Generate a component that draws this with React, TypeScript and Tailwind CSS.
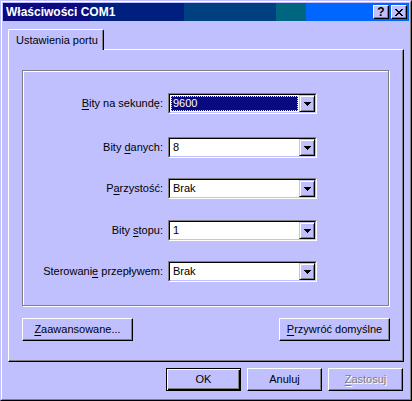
import React from "react";

const FONT = "font-['Liberation_Sans',Arial,sans-serif]";

function U({ c }: { c: string }) {
  return <span className="underline decoration-1 underline-offset-[2px]">{c}</span>;
}

const raised =
  "bg-[#c0c0ff] border border-t-white border-l-white border-r-black border-b-black shadow-[inset_-1px_-1px_0_#808080]";

function Arrow() {
  return (
    <svg width="7" height="4" viewBox="0 0 7 4" shapeRendering="crispEdges">
      <rect x="0" y="0" width="7" height="1" fill="#000" />
      <rect x="1" y="1" width="5" height="1" fill="#000" />
      <rect x="2" y="2" width="3" height="1" fill="#000" />
      <rect x="3" y="3" width="1" height="1" fill="#000" />
    </svg>
  );
}

function CloseX() {
  const px: [number, number, number][] = [
    [0, 0, 2], [6, 0, 2],
    [1, 1, 2], [5, 1, 2],
    [2, 2, 4],
    [3, 3, 2],
    [2, 4, 4],
    [1, 5, 2], [5, 5, 2],
    [0, 6, 2], [6, 6, 2],
  ];
  return (
    <svg width="8" height="7" viewBox="0 0 8 7" shapeRendering="crispEdges">
      {px.map(([x, y, w], i) => (
        <rect key={i} x={x} y={y} width={w} height={1} fill="#000" />
      ))}
    </svg>
  );
}

function Combo({ value, selected }: { value: string; selected?: boolean }) {
  return (
    <div className="w-[149px] h-[21px] border border-t-[#808080] border-l-[#808080] border-r-white border-b-white">
      <div className="h-full flex bg-white border border-t-black border-l-black border-r-[#c0c0ff] border-b-[#c0c0ff]">
        <div className="flex-1 min-w-0 flex">
          {selected ? (
            <div className="flex-1 m-[1px] bg-[#0a0a80] border border-dotted border-[#f0f080] text-white flex items-center pl-[1px] leading-none">
              {value}
            </div>
          ) : (
            <div className="flex-1 flex items-center pl-[3px] text-black leading-none">{value}</div>
          )}
        </div>
        <div className="w-[16px] h-full flex items-center justify-center bg-[#c0c0ff] border border-t-[#c0c0ff] border-l-[#c0c0ff] border-r-black border-b-black shadow-[inset_1px_1px_0_#fff,inset_-1px_-1px_0_#808080]">
          <Arrow />
        </div>
      </div>
    </div>
  );
}

function Row({ label, value, selected, mt }: { label: React.ReactNode; value: string; selected?: boolean; mt: string }) {
  return (
    <div className={`flex items-center h-[21px] ${mt}`}>
      <div className="w-[140px] text-right leading-none">{label}</div>
      <div className="ml-[5px]">
        <Combo value={value} selected={selected} />
      </div>
    </div>
  );
}

export default function App() {
  return (
    <div className={`w-[412px] h-[401px] bg-[#c0c0ff] text-[11px] text-black ${FONT}`}>
      <div className="w-full h-full border border-t-[#c0c0ff] border-l-[#c0c0ff] border-r-black border-b-black">
        <div className="w-full h-full border border-t-white border-l-white border-r-[#808080] border-b-[#808080] p-[1px] flex flex-col">
          {/* Title bar */}
          <div className="h-[18px] shrink-0 flex items-center bg-[linear-gradient(to_right,#0c0c80_87px,#00207f_87px,#00207f_181px,#004080_181px,#004080_273px,#006680_273px,#006680_303px,#0066ff_303px)]">
            <div className="pl-[3px] text-white font-bold text-[12px] leading-none flex-1">Właściwości COM1</div>
            <div className="flex items-center gap-[2px] pr-[2px]">
              <div className={`w-[16px] h-[14px] flex items-center justify-center ${raised}`}>
                <span className="font-bold text-[12px] leading-none">?</span>
              </div>
              <div className={`w-[16px] h-[14px] flex items-center justify-center ${raised}`}>
                <CloseX />
              </div>
            </div>
          </div>

          {/* Tab */}
          <div className="mt-[8px] ml-[5px] relative z-10 w-[96px] h-[21px] bg-[#c0c0ff] border-t border-l border-r border-t-white border-l-white border-r-black rounded-t-[2px] shadow-[inset_-1px_0_0_#808080] flex items-center pl-[7px] leading-none">
            Ustawienia portu
          </div>

          {/* Panel */}
          <div className="-mt-[1px] ml-[5px] w-[396px] h-[313px] shrink-0 border border-t-white border-l-white border-r-black border-b-black shadow-[inset_-1px_-1px_0_#808080] flex flex-col">
            <div className="ml-[13px] mt-[20px] w-[367px] h-[236px] border border-[#808080] shadow-[inset_1px_1px_0_#fff,1px_1px_0_#fff] flex flex-col pt-[22px]">
              <Row
                mt="mt-0"
                selected
                value="9600"
                label={
                  <>
                    <U c="B" />ity na sekundę:
                  </>
                }
              />
              <Row
                mt="mt-[23px]"
                value="8"
                label={
                  <>
                    Bity <U c="d" />anych:
                  </>
                }
              />
              <Row
                mt="mt-[20px]"
                value="Brak"
                label={
                  <>
                    P<U c="a" />rzystość:
                  </>
                }
              />
              <Row
                mt="mt-[21px]"
                value="1"
                label={
                  <>
                    Bity <U c="s" />topu:
                  </>
                }
              />
              <Row
                mt="mt-[20px]"
                value="Brak"
                label={
                  <>
                    Sterowani<U c="e" /> przepływem:
                  </>
                }
              />
            </div>
            <div className="mt-[12px] mx-[13px] flex justify-between">
              <div className={`w-[111px] h-[23px] flex items-center justify-center leading-none ${raised}`}>
                <span>
                  <U c="Z" />aawansowane...
                </span>
              </div>
              <div className={`w-[111px] h-[23px] flex items-center justify-center leading-none ${raised}`}>
                <span>
                  <U c="P" />rzywróć domyślne
                </span>
              </div>
            </div>
          </div>

          {/* Bottom buttons */}
          <div className="mt-[6px] flex justify-end gap-[6px] pr-[6px]">
            <div className="w-[75px] h-[23px] border border-black bg-[#c0c0ff] shadow-[inset_1px_1px_0_#fff,inset_-1px_-1px_0_#000,inset_-2px_-2px_0_#808080] flex items-center justify-center leading-none">
              OK
            </div>
            <div className={`w-[75px] h-[23px] flex items-center justify-center leading-none ${raised}`}>Anuluj</div>
            <div className={`w-[75px] h-[23px] flex items-center justify-center leading-none text-[#808080] [text-shadow:1px_1px_0_#fff] ${raised}`}>
              <span>
                <U c="Z" />astosuj
              </span>
            </div>
          </div>
        </div>
      </div>
    </div>
  );
}
